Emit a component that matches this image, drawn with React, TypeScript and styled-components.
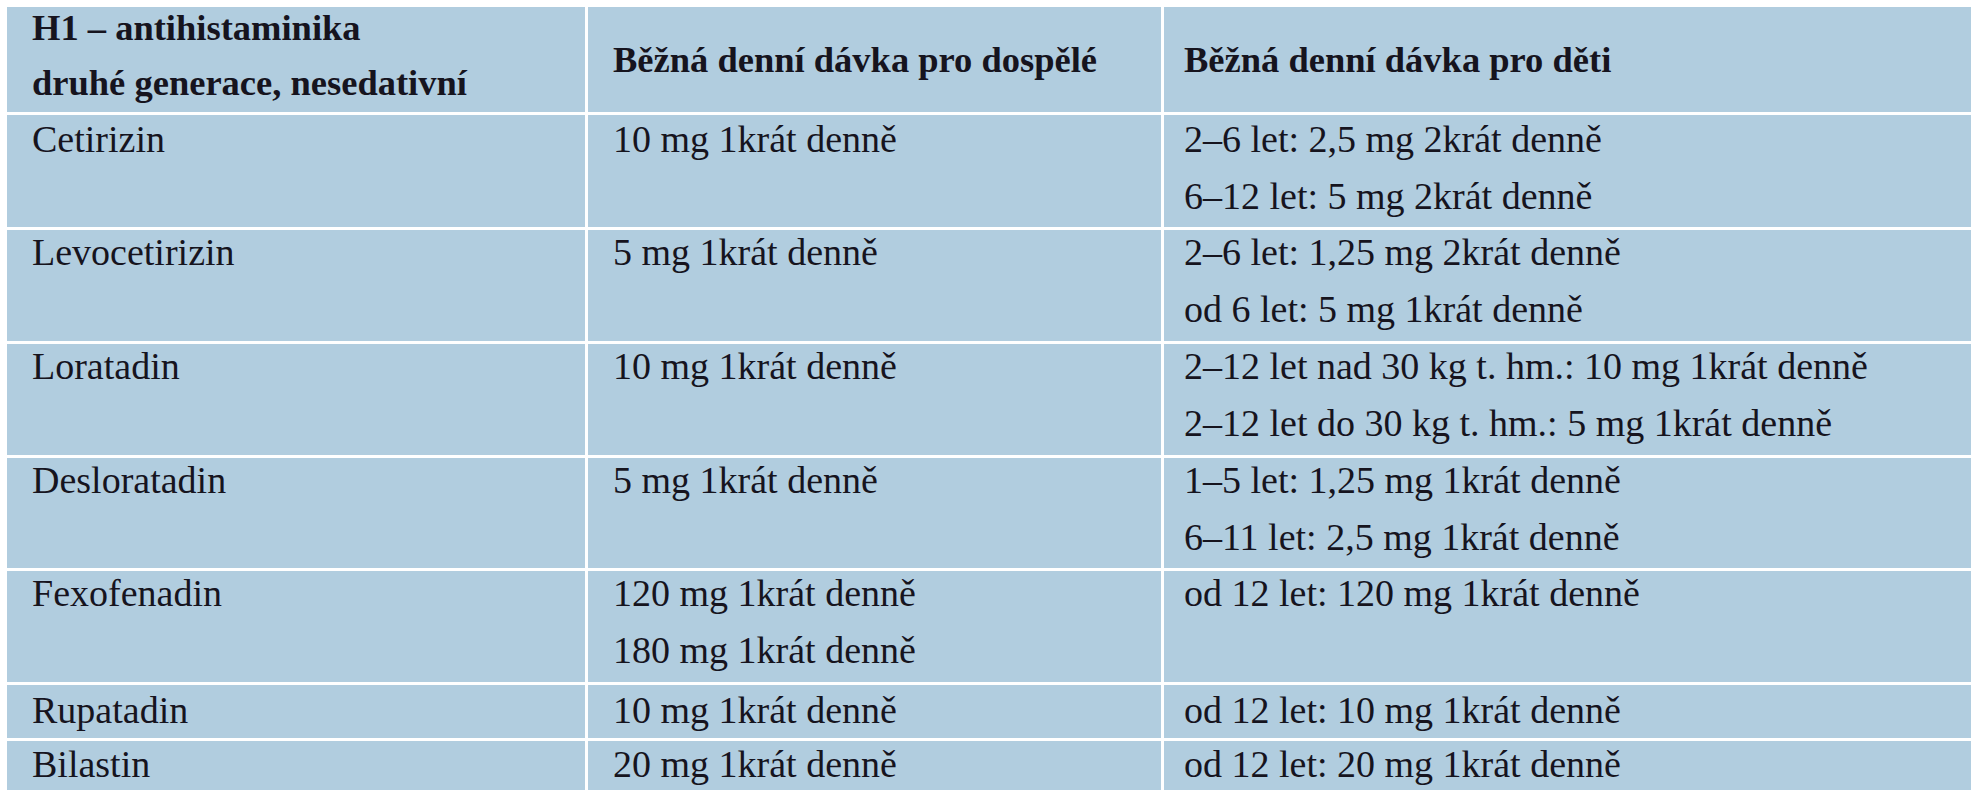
import React from 'react';
import styled, { createGlobalStyle } from 'styled-components';

const GlobalStyle = createGlobalStyle`
  html, body {
    margin: 0;
    padding: 0;
    background: #ffffff;
  }
`;

type Row = {
  name: string;
  adults: string[];
  children: string[];
  height: number;
  offset: number;
};

const ROWS: Row[] = [
  {
    name: 'Cetirizin',
    adults: ['10 mg 1krát denně'],
    children: ['2–6 let: 2,5 mg 2krát denně', '6–12 let: 5 mg 2krát denně'],
    height: 112,
    offset: 2,
  },
  {
    name: 'Levocetirizin',
    adults: ['5 mg 1krát denně'],
    children: ['2–6 let: 1,25 mg 2krát denně', 'od 6 let: 5 mg 1krát denně'],
    height: 111,
    offset: 0,
  },
  {
    name: 'Loratadin',
    adults: ['10 mg 1krát denně'],
    children: [
      '2–12 let nad 30 kg t. hm.: 10 mg 1krát denně',
      '2–12 let do 30 kg t. hm.: 5 mg 1krát denně',
    ],
    height: 111,
    offset: 0,
  },
  {
    name: 'Desloratadin',
    adults: ['5 mg 1krát denně'],
    children: ['1–5 let: 1,25 mg 1krát denně', '6–11 let: 2,5 mg 1krát denně'],
    height: 110,
    offset: 0,
  },
  {
    name: 'Fexofenadin',
    adults: ['120 mg 1krát denně', '180 mg 1krát denně'],
    children: ['od 12 let: 120 mg 1krát denně'],
    height: 111,
    offset: 0,
  },
  {
    name: 'Rupatadin',
    adults: ['10 mg 1krát denně'],
    children: ['od 12 let: 10 mg 1krát denně'],
    height: 53,
    offset: 3,
  },
  {
    name: 'Bilastin',
    adults: ['20 mg 1krát denně'],
    children: ['od 12 let: 20 mg 1krát denně'],
    height: 49,
    offset: 1,
  },
];

export default function App() {
  return (
    <>
      <GlobalStyle />
      <Page>
        <Table>
          <colgroup>
            <col style={{ width: 578 }} />
            <col style={{ width: 573 }} />
            <col style={{ width: 807 }} />
          </colgroup>
          <thead>
            <HeadRow>
              <HeadCell $top={5}>
                <HeadLine>H1 – antihistaminika</HeadLine>
                <HeadLine>druhé generace, nesedativní</HeadLine>
              </HeadCell>
              <HeadCell $middle>Běžná denní dávka pro dospělé</HeadCell>
              <HeadCell $middle $pad={20}>
                Běžná denní dávka pro děti
              </HeadCell>
            </HeadRow>
          </thead>
          <tbody>
            {ROWS.map((row) => (
              <BodyRow key={row.name} $h={row.height}>
                <Cell $top={row.offset}>
                  <Line>{row.name}</Line>
                </Cell>
                <Cell $top={row.offset}>
                  {row.adults.map((text) => (
                    <Line key={text}>{text}</Line>
                  ))}
                </Cell>
                <Cell $top={row.offset} $pad={20}>
                  {row.children.map((text) => (
                    <Line key={text}>{text}</Line>
                  ))}
                </Cell>
              </BodyRow>
            ))}
          </tbody>
        </Table>
      </Page>
    </>
  );
}

const Page = styled.div`
  padding: 4px 0 0 4px;
`;
const Table = styled.table`
  border-collapse: separate;
  border-spacing: 3px;
  table-layout: fixed;
  width: 1969px;
  font-family: 'Liberation Serif', 'Times New Roman', serif;
  font-size: 38px;
  color: #16141e;
`;
const HeadRow = styled.tr`
  height: 105px;
`;
const HeadCell = styled.th<{ $middle?: boolean; $pad?: number; $top?: number }>`
  background: #b1cddf;
  text-align: left;
  font-weight: 700;
  font-size: 36.5px;
  vertical-align: ${({ $middle }) => ($middle ? 'middle' : 'top')};
  padding: ${({ $top }) => $top ?? 0}px 0 0 ${({ $pad }) => $pad ?? 25}px;
  line-height: 44px;
  white-space: nowrap;
`;
const HeadLine = styled.div`
  line-height: 32px;
  & + & {
    margin-top: 23px;
  }
`;
const BodyRow = styled.tr<{ $h: number }>`
  height: ${({ $h }) => $h}px;
`;
const Cell = styled.td<{ $top: number; $pad?: number }>`
  background: #b1cddf;
  vertical-align: top;
  padding: ${({ $top }) => $top}px 0 0 ${({ $pad }) => $pad ?? 25}px;
  white-space: nowrap;
`;
const Line = styled.div`
  line-height: 44px;
  & + & {
    margin-top: 13px;
  }
`;
